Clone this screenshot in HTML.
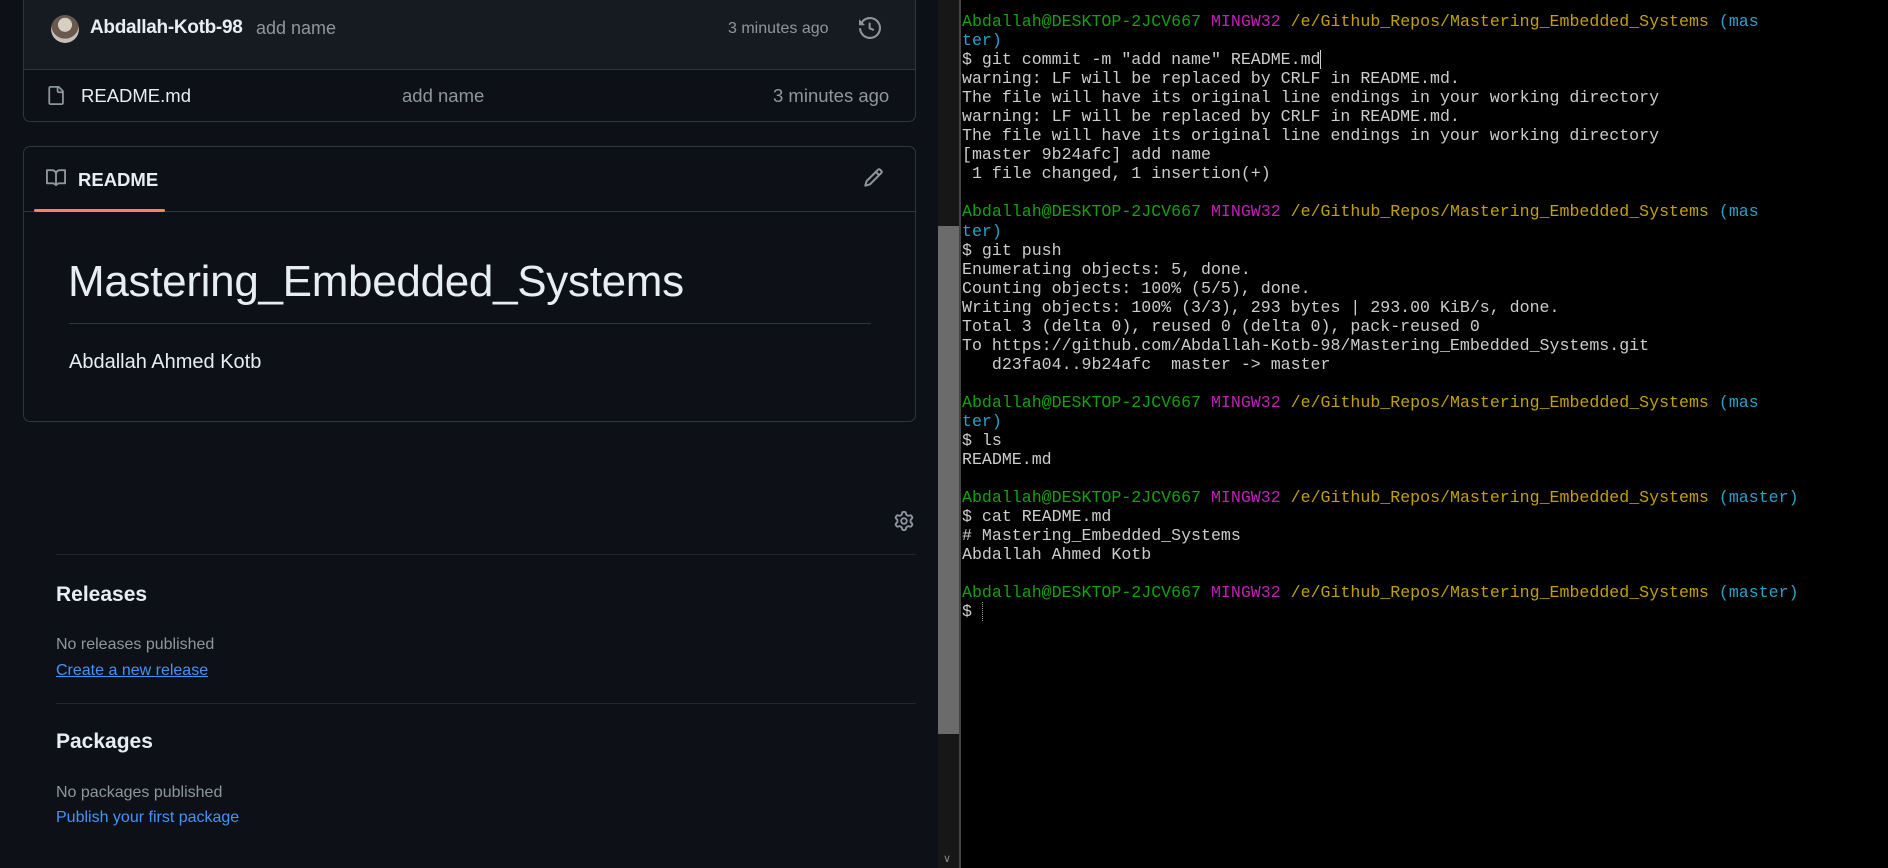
<!DOCTYPE html>
<html><head><meta charset="utf-8"><style>
*{margin:0;padding:0;box-sizing:border-box}
body{width:1888px;height:868px;overflow:hidden;background:#000;position:relative;font-family:"Liberation Sans",sans-serif}
#left{position:absolute;left:0;top:0;width:938px;height:868px;background:#0d1117;color:#e6edf3}
.a{position:absolute;white-space:nowrap}
.box{position:absolute;border:1px solid #30363d;border-radius:7px}
.muted{color:#8d96a0}
.link{color:#4493f8}
#sb{position:absolute;left:938px;top:0;width:22px;height:868px;background:#171717}
#thumb{position:absolute;left:938px;top:226px;width:21px;height:508px;background:#6b6b6b}
#div{position:absolute;left:959px;top:0;width:2px;height:868px;background:#444}
#term{position:absolute;left:962px;top:12px;font-family:"Liberation Mono",monospace;font-size:16.6px;line-height:19.05px;color:#cccccc;white-space:pre}
.g{color:#13a10e}.m{color:#c020b8}.y{color:#c1a000}.c{color:#2aa0c8}
</style></head><body>
<div id="left">
  <div class="box" style="left:23px;top:-10px;width:893px;height:132px;">
    <div style="position:absolute;left:0;top:0;right:0;height:79px;background:#161b22;border-bottom:1px solid #30363d;border-radius:7px 7px 0 0"></div>
  </div>
  <div class="a" style="left:51px;top:15px;width:28px;height:28px;border-radius:50%;background:radial-gradient(circle at 50% 35%,#d8cfc4 0 30%,#6a5a4e 31% 60%,#c8c0b8 61%)"></div>
  <div class="a" style="left:90px;top:17px;font-size:19px;font-weight:bold;color:#e6edf3;letter-spacing:-0.3px">Abdallah-Kotb-98</div>
  <div class="a muted" style="left:256px;top:18px;font-size:18px">add name</div>
  <div class="a muted" style="left:728px;top:20px;font-size:16px">3 minutes ago</div>
  <svg class="a" style="left:859px;top:17px" width="22" height="22" viewBox="0 0 16 16" fill="#8d96a0"><path d="m.427 1.927 1.215 1.215a8.002 8.002 0 1 1-1.6 5.685.75.75 0 1 1 1.493-.154 6.5 6.5 0 1 0 1.18-4.458l1.358 1.358A.25.25 0 0 1 3.896 6H.25A.25.25 0 0 1 0 5.75V2.104a.25.25 0 0 1 .427-.177ZM7.75 4a.75.75 0 0 1 .75.75v2.992l2.028.812a.75.75 0 0 1-.557 1.392l-2.5-1A.751.751 0 0 1 7 8.25v-3.5A.75.75 0 0 1 7.75 4Z"/></svg>
  <svg class="a" style="left:46px;top:85px" width="19" height="21" viewBox="0 0 16 16" fill="#8d96a0"><path d="M2 1.750C2 .784 2.784 0 3.750 0h6.586c.464 0 .909.184 1.237.513l2.914 2.914c.329.328.513.773.513 1.237v9.586A1.75 1.75 0 0 1 13.25 16h-9.5A1.75 1.75 0 0 1 2 14.25Zm1.75-.25a.25.25 0 0 0-.25.25v12.5c0 .138.112.25.25.25h9.5a.25.25 0 0 0 .25-.25V6h-2.75A1.75 1.75 0 0 1 9 4.25V1.5Zm6.75.062V4.25c0 .138.112.25.25.25h2.688l-.011-.013-2.914-2.914-.013-.011Z"/></svg>
  <div class="a" style="left:81px;top:85px;font-size:18.5px;color:#e6edf3">README.md</div>
  <div class="a muted" style="left:402px;top:85px;font-size:18.5px">add name</div>
  <div class="a muted" style="left:773px;top:85px;font-size:18.5px">3 minutes ago</div>

  <div class="box" style="left:23px;top:146px;width:893px;height:276px;">
    <div style="position:absolute;left:0;top:64px;right:0;border-top:1px solid #30363d"></div>
    <div style="position:absolute;left:10px;top:62px;width:131px;height:3px;background:#f78166;border-radius:2px"></div>
  </div>
  <svg class="a" style="left:45px;top:168px" width="22" height="20" viewBox="0 0 16 16" fill="#8d96a0"><path d="M0 1.75A.75.75 0 0 1 .75 1h4.253c1.227 0 2.317.59 3 1.501A3.743 3.743 0 0 1 11.006 1h4.245a.75.75 0 0 1 .75.75v10.5a.75.75 0 0 1-.75.75h-4.507a2.25 2.25 0 0 0-1.591.659l-.622.621a.75.75 0 0 1-1.06 0l-.622-.621A2.25 2.25 0 0 0 5.258 13H.75a.75.75 0 0 1-.75-.75Zm7.251 10.324.004-5.073-.002-2.253A2.25 2.25 0 0 0 5.003 2.5H1.5v9h3.757a3.75 3.75 0 0 1 1.994.574ZM8.755 4.75l-.004 7.322a3.752 3.752 0 0 1 1.992-.572H14.5v-9h-3.495a2.25 2.25 0 0 0-2.25 2.25Z"/></svg>
  <div class="a" style="left:78px;top:169px;font-size:18.5px;font-weight:bold">README</div>
  <svg class="a" style="left:863px;top:167px" width="21" height="21" viewBox="0 0 16 16" fill="#8d96a0"><path d="M11.013 1.427a1.75 1.75 0 0 1 2.474 0l1.086 1.086a1.75 1.75 0 0 1 0 2.474l-8.61 8.61c-.21.21-.47.364-.756.445l-3.251.93a.75.75 0 0 1-.927-.928l.929-3.25c.081-.286.235-.547.445-.758l8.61-8.61Zm.176 4.823L9.75 4.81l-6.286 6.287a.253.253 0 0 0-.064.108l-.558 1.953 1.953-.558a.253.253 0 0 0 .108-.064Zm1.238-3.763a.25.25 0 0 0-.354 0L10.811 3.75l1.439 1.44 1.263-1.263a.25.25 0 0 0 0-.354Z"/></svg>
  <div class="a" style="left:68px;top:257px;font-size:44px;font-weight:500;letter-spacing:-0.3px">Mastering_Embedded_Systems</div>
  <div class="a" style="left:69px;top:323px;width:802px;border-top:1px solid #30363d"></div>
  <div class="a" style="left:69px;top:351px;font-size:20px">Abdallah Ahmed Kotb</div>

  <svg class="a" style="left:894px;top:511px" width="20" height="20" viewBox="0 0 16 16" fill="#8d96a0"><path d="M8 0a8.2 8.2 0 0 1 .701.031C9.444.095 9.99.645 10.160 1.290l.288 1.107c.018.066.079.158.212.224.231.114.454.243.668.386.123.082.233.09.299.071l1.103-.303c.644-.176 1.392.021 1.82.63.27.385.506.792.704 1.218.315.675.111 1.422-.364 1.891l-.814.806c-.049.048-.098.147-.088.294.016.257.016.515 0 .772-.01.147.038.246.088.294l.814.806c.475.469.679 1.216.364 1.891a7.977 7.977 0 0 1-.704 1.217c-.428.61-1.176.807-1.82.63l-1.102-.302c-.067-.019-.177-.011-.3.071a5.909 5.909 0 0 1-.668.386c-.133.066-.194.158-.211.224l-.29 1.106c-.168.646-.715 1.196-1.458 1.26a8.006 8.006 0 0 1-1.402 0c-.743-.064-1.289-.614-1.458-1.26l-.289-1.106c-.018-.066-.079-.158-.212-.224a5.738 5.738 0 0 1-.668-.386c-.123-.082-.233-.09-.299-.071l-1.103.303c-.644.176-1.392-.021-1.820-.63a8.12 8.12 0 0 1-.704-1.218c-.315-.675-.111-1.422.363-1.891l.815-.806c.05-.048.098-.147.088-.294a6.214 6.214 0 0 1 0-.772c.01-.147-.038-.246-.088-.294l-.815-.806C.635 6.045.431 5.298.746 4.623a7.92 7.92 0 0 1 .704-1.217c.428-.61 1.176-.807 1.820-.63l1.102.302c.067.019.177.011.3-.071.214-.143.437-.272.668-.386.133-.066.194-.158.211-.224l.29-1.106C6.009.645 6.556.095 7.299.03 7.53.01 7.764 0 8 0Zm-.571 1.525c-.036.003-.108.036-.137.146l-.289 1.105c-.147.561-.549.967-.998 1.189-.173.086-.34.183-.5.29-.417.278-.97.423-1.529.27l-1.103-.303c-.109-.03-.175.016-.195.045-.22.312-.412.644-.573.99-.014.031-.021.11.059.19l.815.806c.411.406.562.957.53 1.456a4.709 4.709 0 0 0 0 .582c.032.499-.119 1.05-.53 1.456l-.815.806c-.081.08-.073.159-.059.19.162.346.353.677.573.989.02.03.085.076.195.046l1.102-.303c.56-.153 1.113-.008 1.53.27.161.107.328.204.501.29.447.222.85.629.997 1.189l.289 1.105c.029.109.101.143.137.146a6.6 6.6 0 0 0 1.142 0c.036-.003.108-.036.137-.146l.289-1.105c.147-.561.549-.967.998-1.189.173-.086.34-.183.5-.29.417-.278.97-.423 1.529-.27l1.103.303c.109.029.175-.016.195-.045.22-.313.411-.644.573-.99.014-.031.021-.11-.059-.19l-.815-.806c-.411-.406-.562-.957-.53-1.456a4.709 4.709 0 0 0 0-.582c-.032-.499.119-1.05.53-1.456l.815-.806c.081-.08.073-.159.059-.19a6.464 6.464 0 0 0-.573-.989c-.02-.03-.085-.076-.195-.046l-1.102.303c-.56.153-1.113.008-1.53-.27a4.44 4.44 0 0 0-.501-.29c-.447-.222-.85-.629-.997-1.189l-.289-1.105c-.029-.11-.101-.143-.137-.146a6.6 6.6 0 0 0-1.142 0ZM11 8a3 3 0 1 1-6 0 3 3 0 0 1 6 0ZM9.5 8a1.5 1.5 0 1 0-3.001.001A1.5 1.5 0 0 0 9.5 8Z"/></svg>
  <div class="a" style="left:56px;top:554px;width:860px;border-top:1px solid #21262d"></div>
  <div class="a" style="left:56px;top:583px;font-size:21px;font-weight:bold">Releases</div>
  <div class="a muted" style="left:56px;top:636px;font-size:16px">No releases published</div>
  <div class="a link" style="left:56px;top:662px;font-size:16px;text-decoration:underline">Create a new release</div>
  <div class="a" style="left:56px;top:703px;width:860px;border-top:1px solid #21262d"></div>
  <div class="a" style="left:56px;top:730px;font-size:21px;font-weight:bold">Packages</div>
  <div class="a muted" style="left:56px;top:784px;font-size:16px">No packages published</div>
  <div class="a link" style="left:56px;top:809px;font-size:16px">Publish your first package</div>
</div>
<div id="sb"></div><div id="thumb"></div>
<div class="a" style="left:943px;top:852px;color:#888;font-size:11px">&#8744;</div>
<div id="div"></div>
<div id="term"><span class="g">Abdallah@DESKTOP-2JCV667</span> <span class="m">MINGW32</span> <span class="y">/e/Github_Repos/Mastering_Embedded_Systems</span> <span class="c">(mas
ter)</span>
$ git commit -m "add name" README.md<span style="border-left:1px solid #ccc"></span>
warning: LF will be replaced by CRLF in README.md.
The file will have its original line endings in your working directory
warning: LF will be replaced by CRLF in README.md.
The file will have its original line endings in your working directory
[master 9b24afc] add name
 1 file changed, 1 insertion(+)

<span class="g">Abdallah@DESKTOP-2JCV667</span> <span class="m">MINGW32</span> <span class="y">/e/Github_Repos/Mastering_Embedded_Systems</span> <span class="c">(mas
ter)</span>
$ git push
Enumerating objects: 5, done.
Counting objects: 100% (5/5), done.
Writing objects: 100% (3/3), 293 bytes | 293.00 KiB/s, done.
Total 3 (delta 0), reused 0 (delta 0), pack-reused 0
To https://github.com/Abdallah-Kotb-98/Mastering_Embedded_Systems.git
   d23fa04..9b24afc  master -&gt; master

<span class="g">Abdallah@DESKTOP-2JCV667</span> <span class="m">MINGW32</span> <span class="y">/e/Github_Repos/Mastering_Embedded_Systems</span> <span class="c">(mas
ter)</span>
$ ls
README.md

<span class="g">Abdallah@DESKTOP-2JCV667</span> <span class="m">MINGW32</span> <span class="y">/e/Github_Repos/Mastering_Embedded_Systems</span> <span class="c">(master)</span>
$ cat README.md
# Mastering_Embedded_Systems
Abdallah Ahmed Kotb

<span class="g">Abdallah@DESKTOP-2JCV667</span> <span class="m">MINGW32</span> <span class="y">/e/Github_Repos/Mastering_Embedded_Systems</span> <span class="c">(master)</span>
$ <span style="border-left:1px dotted #999"></span></div>
</body></html>
